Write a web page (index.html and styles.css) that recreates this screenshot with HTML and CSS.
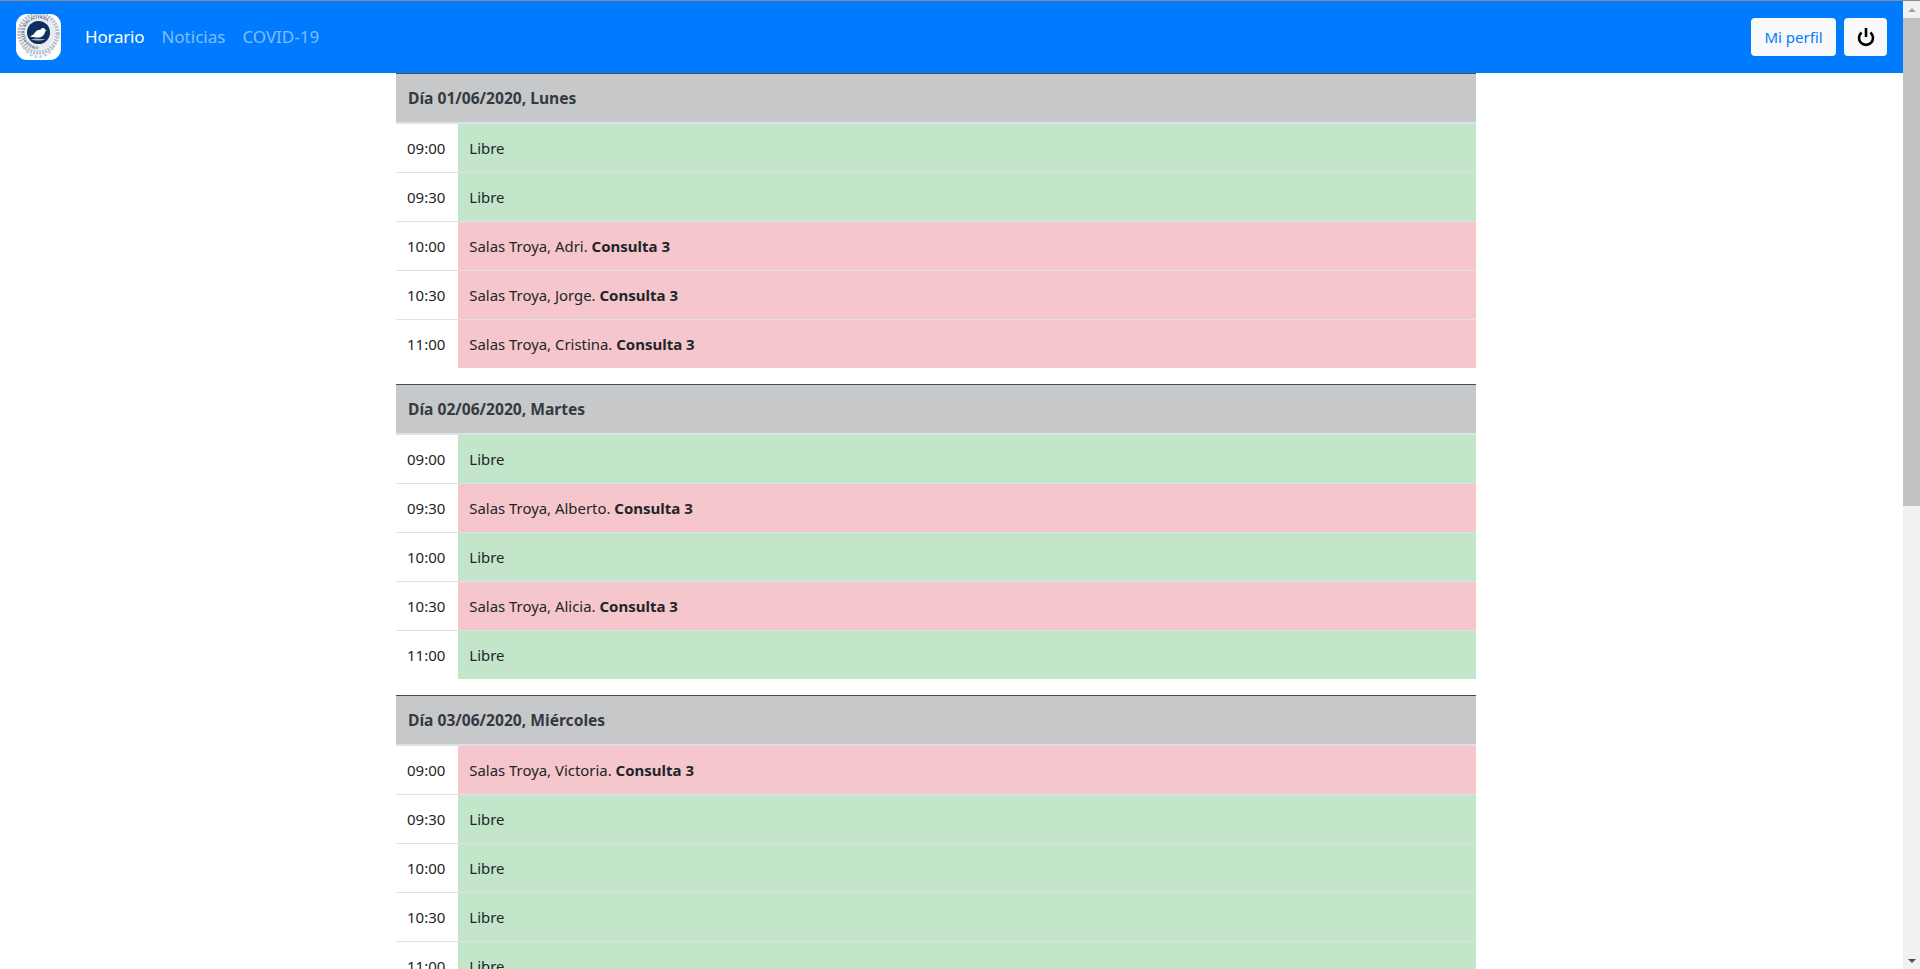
FILE: index.html
```html
<!DOCTYPE html>
<html lang="es">
<head>
    <meta charset="UTF-8">
    <meta name="viewport" content="width=device-width, initial-scale=1.0">
    <title>Horario</title>
    <link rel="stylesheet" href="styles.css">
</head>
<body>
    <div class="page">
        <header class="navbar">
            <svg class="logo" viewBox="0 0 45 46" width="45" height="46">
                <defs>
                    <path id="seal-ring" d="M22.500 32.600a14.100 14.100 0 1 1 .01 0"/>
                </defs>
                <rect width="45" height="46" rx="11" fill="#fff"/>
                <circle cx="22.500" cy="19.500" r="19" fill="none" stroke="#b6bfcb" stroke-width="4.500" stroke-dasharray="2 1"/>
                <path d="M7 33c5 7 10 10 15.500 10S33 40 38 33" fill="none" stroke="#ccd2db" stroke-width="2.500" stroke-dasharray="3 2"/>
                <circle cx="22.500" cy="18.500" r="17" fill="#e8ebef"/>
                <text class="seal-text"><textPath href="#seal-ring">UNIVERSITAS MALACITANA</textPath></text>
                <circle cx="22.500" cy="18.500" r="11.500" fill="#0d2f5e"/>
                <path d="M14 22.500l4-2.500c1-2.500 3.500-4.500 6.500-4.300.5-1.200 1.700-1.900 3-1.600 1 .2 1.600 1 1.800 1.900l1.700.8-1.800.4c-.4 3.300-2.800 6-6.200 6.300-2.800.2-5-.3-9-1z" fill="#fff"/>
                <path d="M15 25.500c3-1 9-1 14.500 0-4 1.300-10.500 1.300-14.500 0z" fill="#aeb9c9"/>
            </svg>
            <nav class="nav-links">
                <a class="nav-link active" href="#">Horario</a>
                <a class="nav-link" href="#">Noticias</a>
                <a class="nav-link" href="#">COVID-19</a>
            </nav>
            <div class="nav-actions">
                <button class="btn btn-text">Mi perfil</button>
                <button class="btn btn-icon" aria-label="Salir">
                    <svg viewBox="0 0 18 20" width="18" height="20" fill="none" stroke="#000" stroke-width="2.600">
                        <path d="M4.600 5.400a7 7 0 1 0 8.800 0"/>
                        <path d="M9 1v9"/>
                    </svg>
                </button>
            </div>
        </header>
        <main class="container" id="schedule"></main>
    </div>
    <div class="scrollbar">
        <span class="arrow arrow-up"></span>
        <div class="track"><div class="thumb"></div></div>
        <span class="arrow arrow-down"></span>
    </div>
    <script>
        const days = [
            { title: 'Día 01/06/2020, Lunes', slots: [null, null, 'Adri', 'Jorge', 'Cristina'] },
            { title: 'Día 02/06/2020, Martes', slots: [null, 'Alberto', null, 'Alicia', null] },
            { title: 'Día 03/06/2020, Miércoles', slots: ['Victoria', null, null, null, null] }
        ];
        const hours = ['09:00', '09:30', '10:00', '10:30', '11:00'];

        const schedule = document.getElementById('schedule');
        days.forEach((day) => {
            let rows = '';
            day.slots.forEach((name, index) => {
                const cell = name
                    ? `<td class="busy">Salas Troya, ${name}. <b>Consulta 3</b></td>`
                    : '<td class="free">Libre</td>';
                rows += `<tr><td class="hour">${hours[index]}</td>${cell}</tr>`;
            });
            schedule.innerHTML += `<table class="day"><thead><tr><th colspan="2">${day.title}</th></tr></thead><tbody>${rows}</tbody></table>`;
        });
    </script>
</body>
</html>
```

FILE: styles.css
```css
html, body {
    height: 100%;
}
body {
    font-family: "Noto Sans", "Open Sans", sans-serif;
    font-size: 14.9px;
    line-height: 24px;
    color: #212529;
    background-color: #fff;
    margin: 0;
    padding: 0;
    box-sizing: border-box;
    border-top: 1px solid #8c8c8c;
    display: flex;
    overflow: hidden;
}
.page {
    flex: 1;
    min-width: 0;
    height: 100%;
    overflow: hidden;
}
.navbar {
    display: flex;
    align-items: center;
    height: 72px;
    box-sizing: border-box;
    padding: 0 16px 1px;
    background-color: #007bff;
}
.logo {
    display: block;
    margin-right: 24px;
}
.seal-text {
    font-size: 4px;
    font-weight: 700;
    fill: #5d6c85;
}
.nav-links {
    display: flex;
    gap: 17px;
}
.nav-link {
    font-size: 17px;
    color: rgba(255, 255, 255, 0.5);
    text-decoration: none;
}
.nav-link.active {
    color: #fff;
    letter-spacing: -0.2px;
}
.nav-actions {
    display: flex;
    gap: 8px;
    margin-left: auto;
}
.btn {
    height: 38px;
    padding: 0;
    font-family: inherit;
    font-size: 15px;
    color: #007bff;
    background-color: #f8f9fa;
    border: none;
    border-radius: 4px;
}
.btn-text {
    width: 85px;
}
.btn-icon {
    display: flex;
    align-items: center;
    justify-content: center;
    width: 43px;
}
.container {
    width: 1141px;
    margin: 0 auto;
    box-sizing: border-box;
    padding: 0 46px 0 15px;
}
.day {
    width: 100%;
    border-collapse: separate;
    border-spacing: 0;
    margin-bottom: 16px;
}
.day th {
    padding: 12px;
    font-size: 15.6px;
    text-align: left;
    color: #343a40;
    background-color: #c6c8ca;
    border-top: 1px solid #454d55;
    border-bottom: 2px solid #dee2e6;
}
.day td {
    padding: 12px 13px 12px 11px;
    border-top: 1px solid #dee2e6;
}
.day tbody tr:first-child td {
    border-top: none;
}
.hour {
    width: 38px;
    font-size: 15px;
}
.free {
    background-color: #c3e6cb;
}
.busy {
    background-color: #f5c6cb;
}
.busy b {
    font-size: 15px;
}
.scrollbar {
    width: 17px;
    height: 100%;
    display: flex;
    flex-direction: column;
    background-color: #f1f1f1;
}
.arrow {
    height: 17px;
    display: flex;
    align-items: center;
    justify-content: center;
}
.arrow::before {
    content: "";
    border-left: 4px solid transparent;
    border-right: 4px solid transparent;
}
.arrow-up::before {
    border-bottom: 4px solid #a3a3a3;
}
.arrow-down::before {
    border-top: 4px solid #505050;
}
.track {
    flex: 1;
}
.thumb {
    height: 488px;
    background-color: #c1c1c1;
}
```
